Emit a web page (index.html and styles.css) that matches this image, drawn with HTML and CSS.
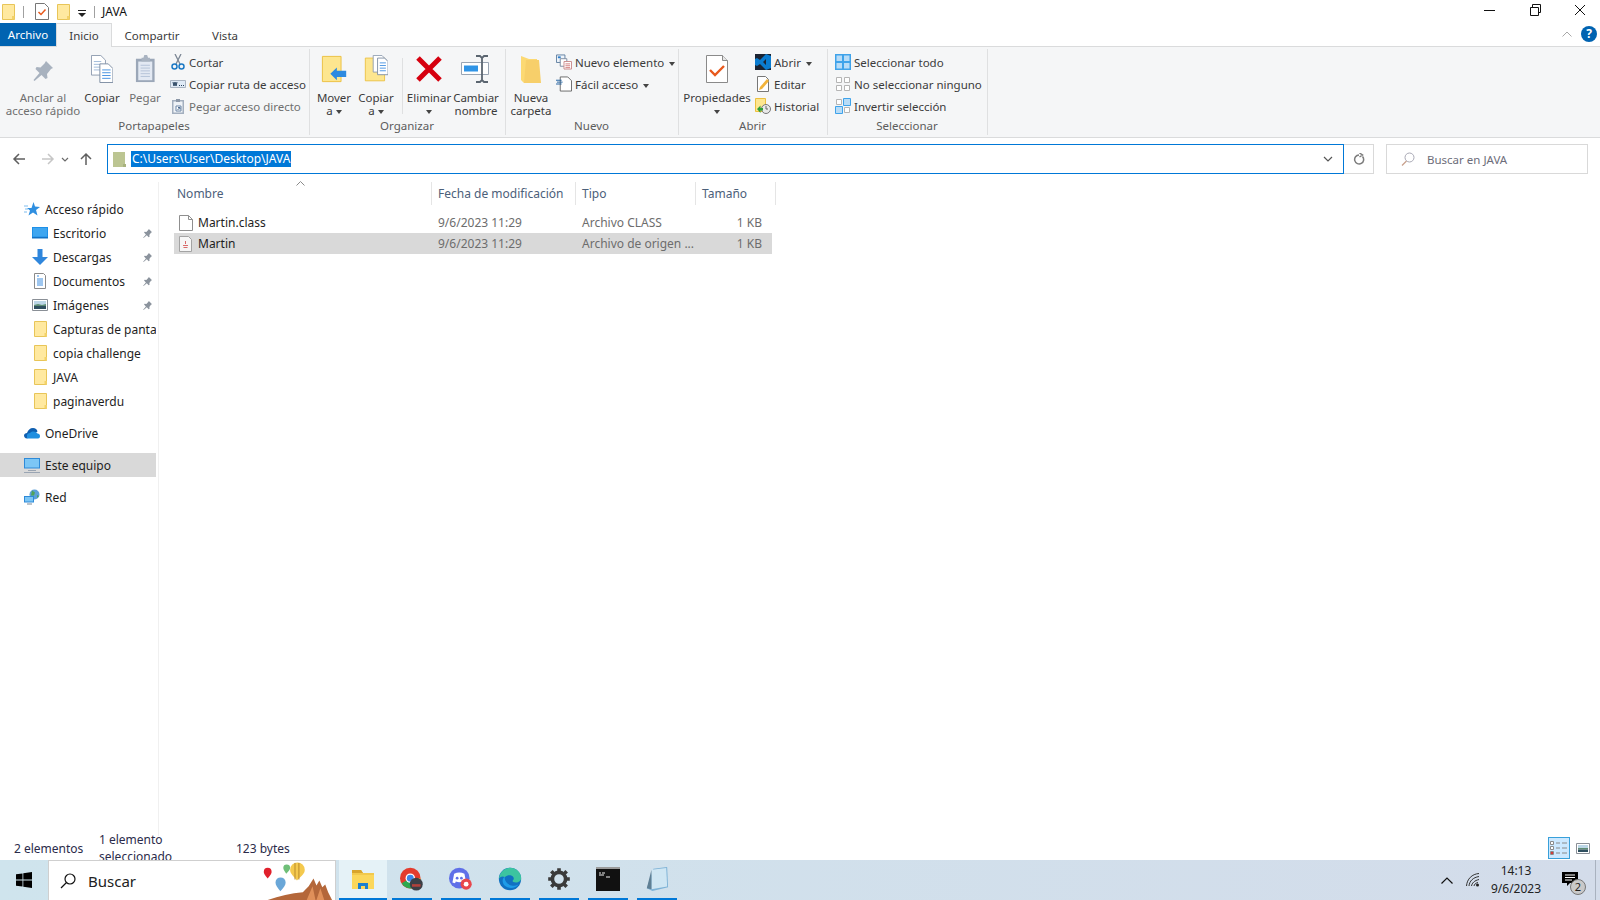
FILE: index.html
```html
<!DOCTYPE html>
<html lang="es">
<head>
    <meta charset="UTF-8">
    <meta name="viewport" content="width=device-width, initial-scale=1.0">
    <title>JAVA</title>
    <link rel="stylesheet" href="styles.css">
</head>
<body>
<div class="window">

    <!-- title bar -->
    <div class="titlebar">
        <svg class="qa-folder" viewBox="0 0 14 16"><path d="M.5.5h12v15H.5z" fill="#ffe9a0" stroke="#e8c558"/><path d="M10 12h2.5v3.5H10z" fill="#f3d269"/></svg>
        <span class="qa-sep"></span>
        <svg class="qa-check" viewBox="0 0 14 17"><path d="M.5.5h9l4 4v12H.5z" fill="#fff" stroke="#777"/><path d="M3.5 9l2.5 2.5 4.5-5" fill="none" stroke="#e8591c" stroke-width="1.5"/></svg>
        <svg class="qa-folder2" viewBox="0 0 14 16"><path d="M.5.5h12v15H.5z" fill="#ffe9a0" stroke="#e8c558"/><path d="M10 12h2.5v3.5H10z" fill="#f3d269"/></svg>
        <svg class="qa-down" viewBox="0 0 8 7"><path d="M0 0h8v1H0zM0 3h8L4 7z" fill="#222"/></svg>
        <span class="qa-sep qa-sep2"></span>
        <span class="title-text">JAVA</span>
        <div class="win-controls">
            <svg class="win-btn" viewBox="0 0 44 14"><path d="M16 7.5h11" stroke="#111" fill="none"/></svg>
            <svg class="win-btn" viewBox="0 0 44 14"><path d="M17.5 4.5h8v8h-8zM19.5 4.5v-3h8v8h-2" stroke="#111" fill="none"/></svg>
            <svg class="win-btn" viewBox="0 0 44 14"><path d="M17 2l10 10M27 2L17 12" stroke="#111" fill="none"/></svg>
        </div>
    </div>

    <!-- tabs -->
    <div class="tabs">
        <div class="tab tab-file">Archivo</div>
        <div class="tab tab-active">Inicio</div>
        <div class="tab tab-share">Compartir</div>
        <div class="tab tab-view">Vista</div>
        <svg class="ribbon-collapse" viewBox="0 0 10 6"><path d="M.5 5.5L5 1l4.500 4.500" fill="none" stroke="#a8a8a8"/></svg>
        <div class="help">?</div>
    </div>

    <!-- ribbon -->
    <div class="ribbon">
        <div class="group g-clip">
            <div class="group-body">
                <div class="big b-pin disabled">
                    <svg class="big-icon" viewBox="0 0 24 24"><path d="M15 2l7 7-2 1-4 5 .5 4-2 1-4-4-7 6-1-1 6-7-4-4 1-2 4 .5 4-4z" fill="#a8b2bf"/></svg>
                    <span>Anclar al<br>acceso rápido</span>
                </div>
                <div class="big b-copy">
                    <svg class="big-icon" viewBox="0 0 24 30"><path d="M.5.500h10l5 5v16H.5z" fill="#fff" stroke="#8b99ad"/><path d="M3 7h8M3 10h10M3 13h10M3 16h10" stroke="#9db8d8"/><path d="M9.500 9.500h9l5 5v15h-14z" fill="#fff" stroke="#7a8aa0"/><path d="M12 16h9M12 19h9M12 22h9M12 25h9" stroke="#3f8ee0"/></svg>
                    <span>Copiar</span>
                </div>
                <div class="big b-paste disabled">
                    <svg class="big-icon" viewBox="0 0 22 30"><path d="M1 4h20v25H1z" fill="#9ba7b8"/><path d="M3.500 7h15v20h-15z" fill="#e3e9f3"/><path d="M6 11h10M6 14h10M6 17h10M6 20h10M6 23h10" stroke="#b3c1d6"/><path d="M7 3h2l1-3h3l1 3h2v4H7z" fill="#a9b3c1"/></svg>
                    <span>Pegar</span>
                </div>
                <div class="small-col sc-clip">
                    <div class="small-row">
                        <svg class="small-icon" viewBox="0 0 16 16"><path d="M5 0l5 10M11 0L6 10" stroke="#7c8794" stroke-width="1.300" fill="none"/><circle cx="4.500" cy="12.500" r="2.500" fill="none" stroke="#1c79c4" stroke-width="1.500"/><circle cx="11.500" cy="12.500" r="2.500" fill="none" stroke="#1c79c4" stroke-width="1.500"/></svg>
                        <span>Cortar</span>
                    </div>
                    <div class="small-row">
                        <svg class="small-icon" viewBox="0 0 16 16"><path d="M.5 4.500h15v7H.5z" fill="#dfeaf6" stroke="#a9b4c2"/><path d="M3 6l1 4 1-4 1 4 1-4M9 9.500h1M11 9.500h1M13 9.500h1" stroke="#28435f" fill="none"/></svg>
                        <span>Copiar ruta de acceso</span>
                    </div>
                    <div class="small-row disabled">
                        <svg class="small-icon" viewBox="0 0 16 16"><path d="M2 2h12v14H2z" fill="#a3afbf"/><path d="M3.500 3.500h9v11h-9z" fill="#eef2f7"/><path d="M6 1h4v3H6z" fill="#8c98a8"/><path d="M6 8h5v5H6z" fill="#fff" stroke="#6c86a6"/><path d="M7.500 12l2-2M8 9.500h2v2" stroke="#4a6a90" fill="none"/></svg>
                        <span>Pegar acceso directo</span>
                    </div>
                </div>
            </div>
            <div class="group-label">Portapapeles</div>
        </div>

        <div class="group g-org">
            <div class="group-body">
                <div class="big b-move">
                    <svg class="big-icon" viewBox="0 0 28 30"><path d="M1.500 1.500h20v27h-20z" fill="#fde68f" stroke="#ecc03f"/><path d="M10 20l7-6.500V17h10v6.500H17v3.500z" fill="#2d8ae0"/></svg>
                    <span>Mover<br>a<i class="caret"></i></span>
                </div>
                <div class="big b-copyto">
                    <svg class="big-icon" viewBox="0 0 28 32"><path d="M1.500 3.500h22v26h-22z" fill="#fde68f" stroke="#ecc03f"/><path d="M10.500.500h10l5 5v14h-15z" fill="#fff" stroke="#8b99ad"/><path d="M15.500 3.500h8l4 4v15h-12z" fill="#fff" stroke="#7a8aa0"/><path d="M18 9h7M18 12h7M18 15h7M18 18h7" stroke="#3f8ee0"/></svg>
                    <span>Copiar<br>a<i class="caret"></i></span>
                </div>
                <span class="big-sep"></span>
                <div class="big b-del">
                    <svg class="big-icon" viewBox="0 0 28 28"><path d="M3 3l22 22M25 3L3 25" stroke="#d6000f" stroke-width="5" fill="none"/></svg>
                    <span>Eliminar<br><i class="caret"></i></span>
                </div>
                <div class="big b-ren">
                    <svg class="big-icon" viewBox="0 0 30 28"><path d="M.500 7.500h27v12H.500z" fill="#fff" stroke="#9aa5b3"/><path d="M3 10.500h14v6H3z" fill="#2f94e6"/><path d="M18 1h4l2 2 2-2h4M18 27h4l2-2 2 2h4M24 3v22" stroke="#5b6570" stroke-width="1.800" fill="none" transform="translate(-3 0)"/></svg>
                    <span>Cambiar<br>nombre</span>
                </div>
            </div>
            <div class="group-label">Organizar</div>
        </div>

        <div class="group g-new">
            <div class="group-body">
                <div class="big b-newf">
                    <svg class="big-icon" viewBox="0 0 22 28"><path d="M1 1l8 3h8l1 24H4L1 25z" fill="#fcd973"/><path d="M6 5h13l2 23H4z" fill="#f7cf6a"/></svg>
                    <span>Nueva<br>carpeta</span>
                </div>
                <div class="small-col sc-new">
                    <div class="small-row">
                        <svg class="small-icon" viewBox="0 0 17 16"><path d="M.5.500h9v8h-9z" fill="#eef4fa" stroke="#5f7fa0"/><path d="M2 2h3v2H2z" fill="#2d7dc8"/><path d="M4.500 4.500h7v8h-7z" fill="#fff" stroke="#7a8aa0"/><path d="M8.500 7.500h8v8h-8z" fill="#fff" stroke="#c98a8a"/><path d="M10 10h5M10 12h5M10 14h5" stroke="#d27a7a"/></svg>
                        <span>Nuevo elemento<i class="caret caret-inline"></i></span>
                    </div>
                    <div class="small-row">
                        <svg class="small-icon" viewBox="0 0 17 16"><path d="M4.500.500h8l4 4v11h-12z" fill="#fff" stroke="#666"/><path d="M0 4h6M1 6h6M0 8h6" stroke="#1e5f9e"/></svg>
                        <span>Fácil acceso<i class="caret caret-inline"></i></span>
                    </div>
                </div>
            </div>
            <div class="group-label">Nuevo</div>
        </div>

        <div class="group g-open">
            <div class="group-body">
                <div class="big b-prop">
                    <svg class="big-icon" viewBox="0 0 22 28"><path d="M.5.500h16l5 5v22H.5z" fill="#fff" stroke="#8a8a8a"/><path d="M16.500.500v5h5" fill="#e6e6e6" stroke="#8a8a8a"/><path d="M4 15l5 5 9-9" fill="none" stroke="#e8591c" stroke-width="2.400"/></svg>
                    <span>Propiedades<br><i class="caret"></i></span>
                </div>
                <div class="small-col sc-open">
                    <div class="small-row">
                        <svg class="small-icon" viewBox="0 0 16 16"><path d="M0 0h16v16H0z" fill="#1b2433"/><path d="M11 0l5 2v12l-5 2-6-6-3 2-2-1v-6l2-1 3 2zM11 5L8 8l3 3z" fill="#0a7cd0"/></svg>
                        <span>Abrir<i class="caret caret-inline"></i></span>
                    </div>
                    <div class="small-row">
                        <svg class="small-icon" viewBox="0 0 16 16"><path d="M2.500.500h8l3 3v12h-11z" fill="#fff" stroke="#777"/><path d="M4 14l1-3 7-8 2 2-7 8z" fill="#f2b33a"/></svg>
                        <span>Editar</span>
                    </div>
                    <div class="small-row">
                        <svg class="small-icon" viewBox="0 0 16 16"><path d="M.5.500h10v13H.5z" fill="#fde68f" stroke="#ecc03f"/><circle cx="11" cy="11" r="4.500" fill="#e9e9e9" stroke="#777"/><path d="M11 8v3h2" stroke="#666" fill="none"/><path d="M2 11l3.500-3.500V10H8v2.500H5.500V15z" fill="#2f9e36"/></svg>
                        <span>Historial</span>
                    </div>
                </div>
            </div>
            <div class="group-label">Abrir</div>
        </div>

        <div class="group g-sel">
            <div class="group-body">
                <div class="small-col sc-sel">
                    <div class="small-row">
                        <svg class="small-icon" viewBox="0 0 16 16"><path d="M0 0h16v16H0z" fill="#3fa3ea"/><path d="M1.500 1.500h5.500v5.500H1.500zM9 1.500h5.500v5.500H9zM1.500 9h5.500v5.500H1.500zM9 9h5.500v5.500H9z" fill="#b8dcf7"/></svg>
                        <span>Seleccionar todo</span>
                    </div>
                    <div class="small-row">
                        <svg class="small-icon" viewBox="0 0 16 16"><path d="M1.500 1.500h5v5h-5zM9.500 1.500h5v5h-5zM1.500 9.500h5v5h-5zM9.500 9.500h5v5h-5z" fill="#fff" stroke="#b5b5b5"/></svg>
                        <span>No seleccionar ninguno</span>
                    </div>
                    <div class="small-row">
                        <svg class="small-icon" viewBox="0 0 16 16"><path d="M1.500 1.500h5v5h-5zM9.500 9.500h5v5h-5z" fill="#fff" stroke="#b5b5b5"/><path d="M8.500.500h7v7h-7zM.500 8.500h7v7h-7z" fill="#b8dcf7" stroke="#3fa3ea"/></svg>
                        <span>Invertir selección</span>
                    </div>
                </div>
            </div>
            <div class="group-label">Seleccionar</div>
        </div>
    </div>

    <!-- address row -->
    <div class="nav-row">
        <div class="nav-buttons">
            <svg class="nav-btn" viewBox="0 0 14 14"><path d="M13 7H2M7 2L2 7l5 5" fill="none" stroke="#5f5f5f" stroke-width="1.500"/></svg>
            <svg class="nav-btn nav-fwd" viewBox="0 0 14 14"><path d="M1 7h11M7 2l5 5-5 5" fill="none" stroke="#c6c6c6" stroke-width="1.500"/></svg>
            <svg class="nav-drop" viewBox="0 0 8 5"><path d="M1 1l3 3 3-3" fill="none" stroke="#6a6a6a" stroke-width="1.200"/></svg>
            <svg class="nav-btn nav-up" viewBox="0 0 14 14"><path d="M7 13V2M2 7l5-5 5 5" fill="none" stroke="#5f5f5f" stroke-width="1.500"/></svg>
        </div>
        <div class="address">
            <svg class="addr-folder" viewBox="0 0 13 15"><path d="M0 0h12v15H0z" fill="#bcc592"/><path d="M10 12h3v3h-3z" fill="#a8b27e"/></svg>
            <span class="addr-sel">C:\Users\User\Desktop\JAVA</span>
            <svg class="addr-drop" viewBox="0 0 10 6"><path d="M1 1l4 4 4-4" fill="none" stroke="#555" stroke-width="1.200"/></svg>
        </div>
        <div class="refresh">
            <svg viewBox="0 0 12 13"><path d="M9.500 3.500a4.500 4.500 0 1 1-3.500-1.500M6.500 0l3 2-3 2" fill="none" stroke="#7c7c7c" stroke-width="1.500"/></svg>
        </div>
        <div class="search">
            <svg viewBox="0 0 14 14"><circle cx="8.500" cy="5.500" r="4.500" fill="none" stroke="#a9a9b5"/><path d="M5.500 9L1 13.500" stroke="#c8a08c" stroke-width="1.300"/></svg>
            <span>Buscar en JAVA</span>
        </div>
    </div>

    <!-- main -->
    <div class="main">
        <div class="sidebar">
            <div class="nav-item lvl1">
                <svg class="nav-icon" viewBox="0 0 16 16"><path d="M9.500 1l1.500 4.500 5 .5-4 3 1.500 5.500L9 11.500 4.500 14.500 6 9.500 3 7h4.500z" fill="#2f8fe0"/><path d="M0 5h4M1 8h3M0 11h3" stroke="#7fbcee"/></svg>
                <span>Acceso rápido</span>
            </div>
            <div class="nav-item lvl2">
                <svg class="nav-icon" viewBox="0 0 16 16"><path d="M0 2h16v11H0z" fill="#1e90e8"/><path d="M1 3h14v8.500H1z" fill="#3ea6f0"/><path d="M0 12h16v1.500H0z" fill="#1372c4"/></svg>
                <span>Escritorio</span>
                <svg class="pin" viewBox="0 0 24 24"><path d="M15 2l7 7-2 1-4 5 .5 4-2 1-4-4-7 6-1-1 6-7-4-4 1-2 4 .5 4-4z" fill="#8b939d"/></svg>
            </div>
            <div class="nav-item lvl2">
                <svg class="nav-icon" viewBox="0 0 16 16"><path d="M5.500 0h5v8H16l-8 8-8-8h5.500z" fill="#2f86dc"/></svg>
                <span>Descargas</span>
                <svg class="pin" viewBox="0 0 24 24"><path d="M15 2l7 7-2 1-4 5 .5 4-2 1-4-4-7 6-1-1 6-7-4-4 1-2 4 .5 4-4z" fill="#8b939d"/></svg>
            </div>
            <div class="nav-item lvl2">
                <svg class="nav-icon" viewBox="0 0 16 16"><path d="M2.500.500h9l2 2v13h-11z" fill="#fff" stroke="#8a8a8a"/><path d="M5 3h2M5 6h6M5 8h6M5 10h6M5 12h6" stroke="#3f8ee0"/></svg>
                <span>Documentos</span>
                <svg class="pin" viewBox="0 0 24 24"><path d="M15 2l7 7-2 1-4 5 .5 4-2 1-4-4-7 6-1-1 6-7-4-4 1-2 4 .5 4-4z" fill="#8b939d"/></svg>
            </div>
            <div class="nav-item lvl2">
                <svg class="nav-icon" viewBox="0 0 16 16"><path d="M.5 2.500h15v11H.5z" fill="#fff" stroke="#8a8f96"/><path d="M2 4h12v4H2z" fill="#bcd6e6"/><path d="M2 8l4-1 4 1 4-1v2H2z" fill="#5e8d73"/><path d="M2 9h12v3H2z" fill="#2f4f5f"/></svg>
                <span>Imágenes</span>
                <svg class="pin" viewBox="0 0 24 24"><path d="M15 2l7 7-2 1-4 5 .5 4-2 1-4-4-7 6-1-1 6-7-4-4 1-2 4 .5 4-4z" fill="#8b939d"/></svg>
            </div>
            <div class="nav-item lvl2">
                <svg class="nav-icon folder-icon" viewBox="0 0 14 16"><path d="M.5.500h12v15H.5z" fill="#ffe9a0" stroke="#e8c558"/><path d="M10.500 12h2.500v3.500h-2.500z" fill="#f3d269"/></svg>
                <span>Capturas de pantalla</span>
            </div>
            <div class="nav-item lvl2">
                <svg class="nav-icon folder-icon" viewBox="0 0 14 16"><path d="M.5.500h12v15H.5z" fill="#ffe9a0" stroke="#e8c558"/><path d="M10.500 12h2.500v3.500h-2.500z" fill="#f3d269"/></svg>
                <span>copia challenge</span>
            </div>
            <div class="nav-item lvl2">
                <svg class="nav-icon folder-icon" viewBox="0 0 14 16"><path d="M.5.500h12v15H.5z" fill="#ffe9a0" stroke="#e8c558"/><path d="M10.500 12h2.500v3.500h-2.500z" fill="#f3d269"/></svg>
                <span>JAVA</span>
            </div>
            <div class="nav-item lvl2">
                <svg class="nav-icon folder-icon" viewBox="0 0 14 16"><path d="M.5.500h12v15H.5z" fill="#ffe9a0" stroke="#e8c558"/><path d="M10.500 12h2.500v3.500h-2.500z" fill="#f3d269"/></svg>
                <span>paginaverdu</span>
            </div>
            <div class="nav-item lvl1 nav-gap">
                <svg class="nav-icon" viewBox="0 0 16 12"><path d="M3 11.500C1 11.500 0 10 0 8.500S1.500 6 3 6c1-3 3-5 6-5 2.500 0 4 1.500 4.500 3.500" fill="#0f5fb0"/><path d="M3 11.500h11c1.500 0 2-1 2-2.500s-1-2.500-2.500-2.500c-1.500-2-5-3-7.500-.5C4 6 3 7 3 8.500z" fill="#1f8fe0"/></svg>
                <span>OneDrive</span>
            </div>
            <div class="nav-item lvl1 nav-gap nav-active">
                <svg class="nav-icon" viewBox="0 0 16 16"><path d="M0 1h16v10.500H0z" fill="#2e8ad8"/><path d="M1 2h14v8.500H1z" fill="#7cc6f5"/><path d="M4 13h8v1H4zM0 15h16v1H0z" fill="#9aa5b3"/></svg>
                <span>Este equipo</span>
            </div>
            <div class="nav-item lvl1 nav-gap">
                <svg class="nav-icon" viewBox="0 0 16 16"><circle cx="10.500" cy="5.500" r="5" fill="#5b9fd8"/><path d="M8 1.500l3 2-1 3-3 0zM13 6l2 1-2 2z" fill="#4fa35a"/><path d="M0 7h10v6.500H0z" fill="#2e8ad8"/><path d="M1 8h8v4.500H1z" fill="#7cc6f5"/><path d="M3 14.500h5v1H3z" fill="#7d8894"/></svg>
                <span>Red</span>
            </div>
        </div>

        <div class="files">
            <div class="file-header">
                <div class="col-head ch-name">Nombre<svg class="sort-caret" viewBox="0 0 9 5"><path d="M.5 4.500l4-4 4 4" fill="none" stroke="#8a8a8a"/></svg></div>
                <div class="col-head ch-date">Fecha de modificación</div>
                <div class="col-head ch-type">Tipo</div>
                <div class="col-head ch-size">Tamaño</div>
            </div>
            <div class="file-row">
                <div class="cell c-name">
                    <svg class="file-icon" viewBox="0 0 14 16"><path d="M.5.500h9l4 4v11H.5z" fill="#fff" stroke="#8f8f8f"/><path d="M9.500.500v4h4" fill="none" stroke="#8f8f8f"/></svg>
                    <span>Martin.class</span>
                </div>
                <div class="cell c-date">9/6/2023 11:29</div>
                <div class="cell c-type">Archivo CLASS</div>
                <div class="cell c-size">1 KB</div>
            </div>
            <div class="file-row row-selected">
                <div class="cell c-name">
                    <svg class="file-icon" viewBox="0 0 14 16"><path d="M.5.500h9l3 3v12H.5z" fill="#f6f6f6" stroke="#a3a3a3"/><path d="M6.500 5v3M4 9.500h5M4.500 11.500h4" stroke="#d96a6a"/></svg>
                    <span>Martin</span>
                </div>
                <div class="cell c-date">9/6/2023 11:29</div>
                <div class="cell c-type">Archivo de origen ...</div>
                <div class="cell c-size">1 KB</div>
            </div>
        </div>
    </div>

    <!-- status bar -->
    <div class="status">
        <span class="st-count">2 elementos</span>
        <span class="st-sel">1 elemento seleccionado</span>
        <span class="st-bytes">123 bytes</span>
        <div class="view-btns">
            <div class="view-btn view-on">
                <svg viewBox="0 0 18 14"><path d="M.5.500h3v3h-3zM.5 5.500h3v3h-3zM.5 10.500h3v3h-3z" fill="#fff" stroke="#8a8a8a"/><path d="M6 2h4M12 2h5M6 7h4M12 7h5M6 12h4M12 12h5" stroke="#8a8a8a"/><path d="M1 11h2v2H1z" fill="#d63a3a"/></svg>
            </div>
            <div class="view-btn">
                <svg viewBox="0 0 14 11"><path d="M.5.500h13v10H.5z" fill="#fff" stroke="#8a8f96"/><path d="M2 2h10v3H2z" fill="#bcd6e6"/><path d="M2 5h10v1.500H2z" fill="#5e8d73"/><path d="M2 6.500h10V9H2z" fill="#2f4f5f"/></svg>
            </div>
        </div>
    </div>

    <!-- taskbar -->
    <div class="taskbar">
        <div class="start">
            <svg viewBox="0 0 16 16"><path d="M0 2.300l6.500-.9v6.200H0zM7.300 1.300L16 0v7.600H7.300zM0 8.400h6.500v6.200L0 13.700zM7.300 8.400H16V16l-8.700-1.300z" fill="#000"/></svg>
        </div>
        <div class="task-search">
            <svg class="ts-lens" viewBox="0 0 16 16"><circle cx="10" cy="6" r="5" fill="none" stroke="#111" stroke-width="1.200"/><path d="M6.500 9.500L1 15" stroke="#111" stroke-width="1.300"/></svg>
            <span>Buscar</span>
            <svg class="ts-art" viewBox="0 0 80 40">
                <path d="M12 18c-3-4-4-5-4-7a4 4 0 0 1 8 0c0 2-1 3-4 7z" fill="#e0202c"/>
                <path d="M31 13c-2-3-3-4-3-6a3.500 3.500 0 0 1 7 0c0 2-1 3-4 6z" fill="#6fbf78"/>
                <path d="M25 31c-3-4-5-6-5-9a5.200 5.200 0 0 1 10.400 0c0 3-2 5-5.400 9z" fill="#6aa7d8"/>
                <path d="M42 20c-4-5-7-7-7-11a7.500 7.500 0 0 1 15 0c0 4-3 6-8 11z" fill="#f4c94e"/>
                <path d="M40 2v17M44 2v17" stroke="#b98a2a"/>
                <path d="M12 40c12-4 24-7 36-8l6-6 5-8 3 7 3-5 3 7 3-3 3 8 4 8z" fill="#b4673a"/>
                <path d="M52 40l6-14 3 14zM62 40l4-12 4 12z" fill="#e0905a"/>
            </svg>
        </div>
        <div class="tile tile-explorer">
            <svg viewBox="0 0 24 24"><path d="M1 3h9l2 3h11v16H1z" fill="#f2c94c"/><path d="M1 3h9l2 3H1z" fill="#d9a52d"/><path d="M1 8h22v14H1z" fill="#fbd75b"/><path d="M7 22v-6h10v6h-3v-3h-4v3z" fill="#1a7fd0"/></svg>
        </div>
        <div class="tile">
            <svg viewBox="0 0 28 28"><circle cx="12" cy="13" r="12" fill="#e33b2e"/><path d="M12 13L2 19a12 12 0 0 0 11 6z" fill="#2da94f"/><path d="M12 13l1 12a12 12 0 0 0 11-12z" fill="#fbc02d"/><circle cx="12" cy="13" r="5.500" fill="#fff"/><circle cx="12" cy="13" r="4" fill="#3d85e6"/><circle cx="19" cy="20" r="7.500" fill="#3c3f46"/><path d="M14 20h10v3H14z" fill="#b3413b"/></svg>
        </div>
        <div class="tile">
            <svg viewBox="0 0 28 28"><circle cx="12" cy="13" r="12" fill="#5f6fe8"/><path d="M6 8c4-2 8-2 12 0l2 10-3 1-1-2c-3 1-5 1-8 0l-1 2-3-1z" fill="#fff"/><circle cx="9.500" cy="13" r="1.600" fill="#5f6fe8"/><circle cx="14.500" cy="13" r="1.600" fill="#5f6fe8"/><circle cx="20" cy="20" r="6.500" fill="#e8474c"/><circle cx="20" cy="20" r="2.800" fill="#fff"/></svg>
        </div>
        <div class="tile">
            <svg viewBox="0 0 28 28"><circle cx="14" cy="14" r="13" fill="#1171c2"/><path d="M1 14C2 5 9 1 14 1c7 0 13 5 13 12 0 3-3 5-6 5-3 0-4-1-4-2 1-1 2-2 1-4-2-3-7-3-10 0-3-2-6 0-7 2z" fill="#3cc4a0"/><path d="M8 22c-3-3-4-8 0-11-1 5 3 10 9 11 3 0 5-1 7-2-3 5-11 6-16 2z" fill="#1e9ce8"/></svg>
        </div>
        <div class="tile">
            <svg viewBox="0 0 20 20"><circle cx="10" cy="10" r="5.500" fill="none" stroke="#3a3a3a" stroke-width="3"/><path d="M10 1v3M10 16v3M1 10h3M16 10h3M3.600 3.600l2.100 2.100M14.300 14.300l2.100 2.100M3.600 16.400l2.100-2.100M14.300 5.700l2.100-2.100" stroke="#3a3a3a" stroke-width="3"/></svg>
        </div>
        <div class="tile">
            <svg viewBox="0 0 24 24"><path d="M0 0h24v24H0z" fill="#111"/><path d="M0 0h24v2H0z" fill="#9a9a9a"/><path d="M3 6h2M6 6h3M3 8h5M10 10h4" stroke="#eee"/></svg>
        </div>
        <div class="tile">
            <svg viewBox="0 0 24 26"><path d="M8 2l15-2 1 22-17 4-6-3z" fill="#7db2d6"/><path d="M6 3l16-2 1 20-17 3z" fill="#cfe6f3"/><path d="M1 23L6 3v21z" fill="#5f7f94"/></svg>
        </div>
        <div class="tray">
            <svg class="tray-caret" viewBox="0 0 12 7"><path d="M.5 6.500L6 1l5.500 5.500" fill="none" stroke="#111" stroke-width="1.200"/></svg>
            <svg class="tray-wifi" viewBox="0 0 14 14"><path d="M.5 13C1 6 6 1 13 .5M3 13c.5-5 4-8.500 10-9.500M5.500 13c.5-3 3-5.500 7.500-6.500M8 13c.3-1.500 1.500-3 4-3.500" fill="none" stroke="#333"/><circle cx="11.500" cy="12" r="1.500" fill="#222"/></svg>
            <div class="clock">
                <div>14:13</div>
                <div>9/6/2023</div>
            </div>
            <div class="notify">
                <svg viewBox="0 0 16 14"><path d="M0 0h16v11H8l-3 3v-3H0z" fill="#000"/><path d="M3 3h10M3 5.500h10M3 8h7" stroke="#fff"/></svg>
                <span class="badge">2</span>
            </div>
            <span class="show-desktop"></span>
        </div>
    </div>
</div>
</body>
</html>
```

FILE: styles.css
```css
* {
    box-sizing: border-box;
}
body {
    margin: 0;
    font-family: "Noto Sans", "Open Sans", sans-serif;
    font-size: 11.5px;
    color: #2b2b2b;
    background: #fff;
}
svg {
    display: block;
    flex: none;
}
.window {
    width: 1600px;
    height: 900px;
    display: flex;
    flex-direction: column;
    overflow: hidden;
}

/* title bar */
.titlebar {
    height: 23px;
    display: flex;
    align-items: center;
    padding-left: 2px;
}
.qa-folder {
    width: 14px;
    height: 16px;
}
.qa-sep {
    width: 1px;
    height: 12px;
    background: #a0a0a0;
    margin-left: 7px;
}
.qa-check {
    width: 14px;
    height: 17px;
    margin-left: 11px;
}
.qa-folder2 {
    width: 14px;
    height: 16px;
    margin-left: 8px;
}
.qa-down {
    width: 8px;
    height: 7px;
    margin-left: 7px;
    margin-top: 3px;
}
.qa-sep2 {
    margin-left: 8px;
}
.title-text {
    margin-left: 7px;
    font-size: 12px;
    color: #111;
}
.win-controls {
    margin-left: auto;
    display: flex;
    margin-right: -3px;
    margin-top: -4px;
}
.win-btn {
    width: 44px;
    height: 14px;
    margin-right: 1px;
}

/* tabs */
.tabs {
    height: 24px;
    display: flex;
    position: relative;
    z-index: 1;
    align-items: stretch;
}
.tab {
    display: flex;
    align-items: center;
    justify-content: center;
    color: #3b3b3b;
}
.tab-file {
    width: 56px;
    background: #0063b1;
    color: #fff;
    height: 23px;
}
.tab-active {
    width: 56px;
    background: #f5f6f7;
    border: 1px solid #dadbdc;
    border-bottom: none;
}
.tab-share {
    width: 80px;
}
.tab-view {
    width: 50px;
    margin-left: 8px;
}
.ribbon-collapse {
    width: 10px;
    height: 6px;
    margin: 8px 0 0 auto;
}
.help {
    width: 16px;
    height: 16px;
    border-radius: 50%;
    background: #0063b1;
    color: #fff;
    font-weight: bold;
    font-size: 12px;
    line-height: 16px;
    text-align: center;
    margin: 3px 3px 0 9px;
}

/* ribbon */
.ribbon {
    height: 92px;
    background: #f5f6f7;
    border-top: 1px solid #dadbdc;
    border-bottom: 1px solid #dadbdc;
    margin-top: -1px;
    display: flex;
}
.group {
    display: flex;
    flex-direction: column;
    padding-top: 3px;
    position: relative;
}
.group::after {
    content: "";
    position: absolute;
    right: 0;
    top: 2px;
    bottom: 2px;
    width: 1px;
    background: #dfe0e1;
}
.g-clip {
    width: 310px;
}
.g-org {
    width: 196px;
}
.g-new {
    width: 173px;
}
.g-open {
    width: 149px;
}
.g-sel {
    width: 160px;
}
.group-body {
    flex: 1;
    display: flex;
}
.group-label {
    height: 20px;
    text-align: center;
    color: #5c5c5c;
    padding-right: 2px;
    line-height: 18px;
}
.big {
    display: flex;
    flex-direction: column;
    align-items: center;
    text-align: center;
    line-height: 13px;
    color: #3b3b3b;
    white-space: nowrap;
}
.big-icon {
    height: 28px;
    width: auto;
    margin-top: 5px;
    margin-bottom: 8px;
}
.disabled,
.disabled span {
    color: #6f6f6f;
}
.big-sep {
    width: 1px;
    height: 56px;
    background: #dfe0e1;
    margin: 8px 3px 0 6px;
}
.b-pin {
    width: 72px;
    margin-left: 7px;
}
.b-pin .big-icon {
    height: 24px;
    margin-top: 9px;
    margin-bottom: 8px;
}
.b-copy {
    width: 46px;
}
.b-paste {
    width: 40px;
}
.g-org .group-body {
    padding-left: 2px;
}
.b-move {
    width: 44px;
}
.b-copyto {
    width: 40px;
}
.b-del {
    width: 46px;
}
.b-ren {
    width: 48px;
}
.b-newf {
    width: 46px;
    margin-left: 2px;
}
.b-prop {
    width: 68px;
    margin-left: 4px;
}
.caret {
    display: inline-block;
    width: 0;
    height: 0;
    border-left: 3.5px solid transparent;
    border-right: 3.5px solid transparent;
    border-top: 4px solid #444;
    margin-left: 3px;
    vertical-align: 1px;
}
.b-del .caret,
.b-prop .caret {
    margin-left: 0;
}
.caret-inline {
    margin-left: 5px;
}
.small-col {
    display: flex;
    flex-direction: column;
    padding-top: 1px;
}
.small-row {
    height: 22px;
    display: flex;
    align-items: center;
    gap: 3px;
    white-space: nowrap;
    color: #3b3b3b;
}
.small-icon {
    width: 16px;
    height: 16px;
}
.sc-clip {
    margin-left: 5px;
}
.sc-new {
    margin-left: 2px;
}
.sc-open {
    margin-left: 4px;
}
.sc-sel {
    margin-left: 7px;
}

/* address row */
.nav-row {
    height: 44px;
    padding: 6px 12px 8px 0;
    display: flex;
}
.nav-buttons {
    width: 107px;
    display: flex;
    align-items: center;
    padding-left: 12px;
}
.nav-btn {
    width: 14px;
    height: 14px;
}
.nav-fwd {
    margin-left: 15px;
}
.nav-drop {
    width: 8px;
    height: 5px;
    margin-left: 6px;
}
.nav-up {
    margin-left: 10px;
}
.address {
    flex: 1;
    border: 1px solid #0078d7;
    display: flex;
    align-items: center;
    padding-left: 5px;
    padding-right: 10px;
}
.addr-folder {
    width: 13px;
    height: 15px;
}
.addr-sel {
    background: #0078d7;
    color: #fff;
    margin-left: 5px;
    font-size: 12px;
    line-height: 16px;
    padding: 0 1px;
}
.addr-drop {
    width: 10px;
    height: 6px;
    margin-left: auto;
}
.refresh {
    width: 30px;
    border: 1px solid #d9d9d9;
    border-left: none;
    display: flex;
    align-items: center;
    justify-content: center;
}
.refresh svg {
    width: 12px;
    height: 13px;
}
.search {
    width: 202px;
    margin-left: 12px;
    border: 1px solid #d9d9d9;
    display: flex;
    align-items: center;
    padding-left: 14px;
    gap: 12px;
    color: #6d6d7a;
}
.search svg {
    width: 14px;
    height: 14px;
}

/* main area */
.main {
    flex: 1;
    display: flex;
    min-height: 0;
}
.sidebar {
    width: 159px;
    border-right: 1px solid #f0f0f0;
    padding-top: 15px;
}
.nav-item {
    height: 24px;
    width: 156px;
    display: flex;
    align-items: center;
    font-size: 12px;
    color: #1e1e1e;
    overflow: hidden;
    white-space: nowrap;
    position: relative;
}
.nav-icon {
    width: 16px;
    height: 16px;
    margin-right: 5px;
}
.lvl1 {
    padding-left: 24px;
}
.lvl2 {
    padding-left: 32px;
}
.folder-icon {
    width: 14px;
    margin-left: 2px;
}
.nav-gap {
    margin-top: 8px;
}
.nav-active {
    background: #d9d9d9;
}
.pin {
    width: 11px;
    height: 11px;
    position: absolute;
    left: 142px;
    top: 7px;
}
.files {
    flex: 1;
    padding-left: 7px;
}
.file-header {
    height: 23px;
    display: flex;
    color: #4c607a;
    font-size: 12px;
}
.col-head {
    border-right: 1px solid #e5e5e5;
    display: flex;
    align-items: center;
    position: relative;
}
.ch-name {
    width: 266px;
    padding-left: 11px;
}
.ch-date {
    width: 144px;
    padding-left: 6px;
}
.ch-type {
    width: 120px;
    padding-left: 6px;
}
.ch-size {
    width: 80px;
    padding-left: 6px;
}
.sort-caret {
    position: absolute;
    width: 9px;
    height: 5px;
    left: 130px;
    top: -1px;
}
.file-row {
    width: 598px;
    height: 21px;
    margin-left: 8px;
    display: flex;
    align-items: center;
    font-size: 12px;
    color: #6d6d6d;
}
.file-header + .file-row {
    margin-top: 7px;
}
.row-selected {
    background: #d9d9d9;
}
.cell {
    white-space: nowrap;
}
.c-name {
    width: 258px;
    padding-left: 5px;
    display: flex;
    align-items: center;
    gap: 5px;
    color: #1e1e1e;
}
.file-icon {
    width: 14px;
    height: 16px;
}
.c-date {
    width: 144px;
    padding-left: 6px;
}
.c-type {
    width: 120px;
    padding-left: 6px;
}
.c-size {
    width: 70px;
    text-align: right;
    padding-right: 4px;
}

/* status bar */
.status {
    height: 24px;
    display: flex;
    align-items: center;
    font-size: 12px;
    color: #2b2b4a;
    padding-left: 14px;
}
.st-count {
    width: 85px;
}
.st-sel {
    width: 137px;
}
.view-btns {
    margin-left: auto;
    display: flex;
    align-items: center;
    margin-right: 6px;
}
.view-btn {
    width: 22px;
    height: 22px;
    display: flex;
    align-items: center;
    justify-content: center;
    margin-left: 2px;
}
.view-btn svg {
    width: 14px;
    height: 11px;
}
.view-on {
    background: #cce8ff;
    border: 1px solid #38a0da;
}
.view-on svg {
    width: 18px;
    height: 14px;
}

/* taskbar */
.taskbar {
    height: 40px;
    display: flex;
    background: linear-gradient(90deg, #cfe4ed, #d3dcea);
}
.start {
    width: 48px;
    display: flex;
    align-items: center;
    justify-content: center;
}
.start svg {
    width: 16px;
    height: 16px;
}
.task-search {
    width: 288px;
    background: #fff;
    border: 1px solid #cfcfcf;
    border-bottom: none;
    display: flex;
    align-items: center;
    padding-left: 11px;
    font-size: 15px;
    color: #222;
    margin-right: 3px;
}
.ts-lens {
    width: 16px;
    height: 16px;
    margin-right: 12px;
}
.ts-art {
    width: 80px;
    height: 39px;
    margin-left: auto;
}
.tile {
    width: 40px;
    margin-right: 9px;
    border-bottom: 2px solid #0078d7;
    display: flex;
    align-items: center;
    justify-content: center;
}
.tile svg {
    width: 24px;
    height: 24px;
}
.tile-explorer {
    width: 48px;
    margin-right: 5px;
    background: #e5f2f7;
}
.tray {
    margin-left: auto;
    display: flex;
    align-items: center;
    font-size: 12px;
    color: #222;
}
.tray-caret {
    width: 12px;
    height: 7px;
}
.tray-wifi {
    width: 14px;
    height: 14px;
    margin-left: 13px;
}
.clock {
    width: 60px;
    margin-left: 6px;
    text-align: center;
    line-height: 18px;
}
.notify {
    width: 38px;
    margin-left: 6px;
    height: 100%;
    display: flex;
    align-items: center;
    padding-left: 10px;
    position: relative;
}
.notify svg {
    width: 16px;
    height: 14px;
    margin-bottom: 2px;
}
.badge {
    position: absolute;
    left: 18px;
    top: 19px;
    width: 16px;
    height: 16px;
    border-radius: 50%;
    background: #c9c9c9;
    border: 1px solid #777;
    font-size: 11px;
    line-height: 14px;
    text-align: center;
}
.show-desktop {
    width: 1px;
    height: 100%;
    background: #a9b2bf;
    margin: 0 4px 0 5px;
}
```
